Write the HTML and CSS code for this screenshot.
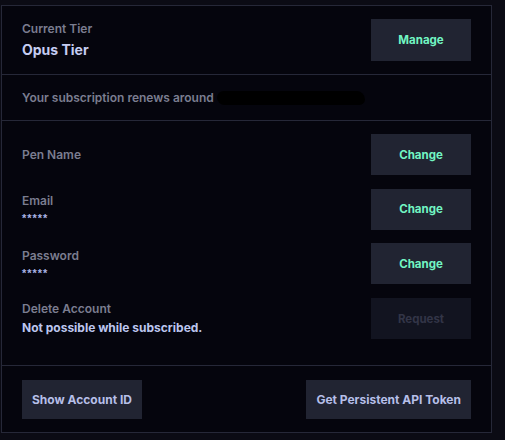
FILE: index.html
```html
<!DOCTYPE html>
<html>
<head>
<meta charset="utf-8">
<link rel="stylesheet" href="styles.css">
</head>
<body>
<div class="panel">
  <section class="sec sec-tier">
    <div class="info">
      <div class="label">Current Tier</div>
      <div class="tier">Opus Tier</div>
    </div>
    <button class="btn btn-green btn-tall">Manage</button>
  </section>
  <section class="sec sec-renew">
    <div class="label renew">Your subscription renews around <span class="redact"></span></div>
  </section>
  <section class="sec sec-rows">
    <div class="row">
      <div class="info"><div class="label">Pen Name</div></div>
      <button class="btn btn-green">Change</button>
    </div>
    <div class="row">
      <div class="info"><div class="label">Email</div><div class="stars">*****</div></div>
      <button class="btn btn-green">Change</button>
    </div>
    <div class="row">
      <div class="info"><div class="label">Password</div><div class="stars">*****</div></div>
      <button class="btn btn-green">Change</button>
    </div>
    <div class="row">
      <div class="info"><div class="label">Delete Account</div><div class="note">Not possible while subscribed.</div></div>
      <button class="btn btn-disabled">Request</button>
    </div>
  </section>
  <section class="sec sec-bottom">
    <button class="btn btn-lav btn-auto">Show Account ID</button>
    <button class="btn btn-lav btn-auto">Get Persistent API Token</button>
  </section>
</div>
</body>
</html>
```

FILE: styles.css
```css
html, body {
  margin: 0;
  padding: 0;
  background: #0b0b14;
  font-family: Inter, "Noto Sans", sans-serif;
}
.panel {
  box-sizing: border-box;
  margin: 5px 0 0 1px;
  width: 491px;
  height: 428px;
  border: 1px solid #262838;
  background: #05050d;
  display: flex;
  flex-direction: column;
}
.sec {
  border-bottom: 1px solid #262838;
  padding: 0 20px 0 20px;
}
.sec:last-child { border-bottom: none; }
.sec-tier {
  height: 68px;
  display: flex;
  align-items: center;
  justify-content: space-between;
}
.sec-renew {
  height: 45px;
  display: flex;
  align-items: center;
}
.sec-rows {
  height: 245px;
  box-sizing: border-box;
  padding-top: 13px;
  display: flex;
  flex-direction: column;
  gap: 13.5px;
}
.sec-bottom {
  flex: 1;
  display: flex;
  align-items: center;
  justify-content: space-between;
}
.row {
  display: flex;
  align-items: center;
  justify-content: space-between;
  height: 41px;
}
.label {
  color: #7b7d90;
  font-size: 12px;
  font-weight: 600;
  line-height: 16px;
}
.tier {
  color: #c5cdf2;
  font-size: 14px;
  font-weight: 700;
  line-height: 20px;
  margin-top: 3px;
}
.stars {
  color: #aab4e6;
  font-family: "Liberation Sans", sans-serif;
  font-size: 11px;
  font-weight: 700;
  line-height: 14px;
  letter-spacing: 1px;
  margin-top: 2px;
}
.note {
  color: #bcc5ee;
  font-size: 12px;
  font-weight: 700;
  line-height: 16px;
  margin-top: 3px;
}
.redact {
  display: inline-block;
  vertical-align: middle;
  width: 148px;
  height: 14px;
  margin-left: 0;
  background: #000;
  border-radius: 7px 9px 6px 8px;
}
.btn {
  border: none;
  width: 100px;
  height: 41px;
  font-family: Inter, "Noto Sans", sans-serif;
  font-size: 11.5px;
  font-weight: 700;
  padding: 0;
}
.btn-tall { height: 42px; }
.btn-green {
  background: #212432;
  color: #72f5c3;
}
.btn-disabled {
  background: #121420;
  color: #323547;
  padding-top: 2px;
}
.btn-lav {
  background: #212432;
  color: #b6bfe8;
}
.btn-auto {
  width: auto;
  height: 39px;
  padding: 0 10px;
  font-size: 12px;
}
```
